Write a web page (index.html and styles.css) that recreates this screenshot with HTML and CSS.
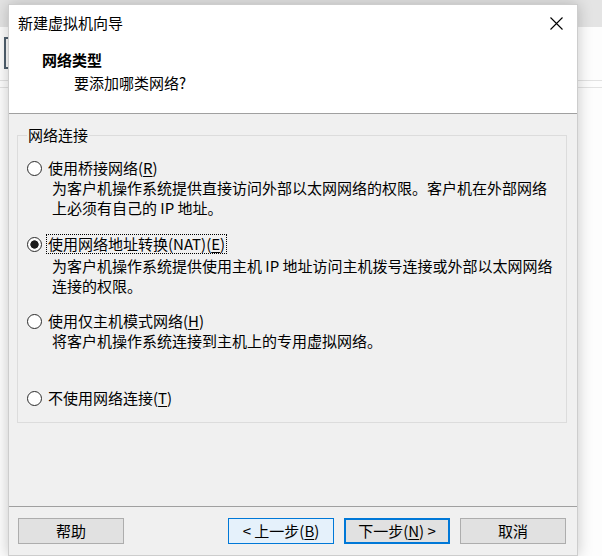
FILE: index.html
```html
<!DOCTYPE html>
<html lang="zh-CN">
<head>
<meta charset="utf-8">
<title>新建虚拟机向导</title>
<link rel="stylesheet" href="styles.css">
</head>
<body>
<div class="desk">
  <div class="backdrop">
    <div class="bd-top"></div>
    <div class="bd-box"></div>
    <div class="bd-line l1"></div>
    <div class="bd-line l2"></div>
  </div>

  <div class="dialog">
    <div class="header">
      <div class="titlebar">
        <span class="title">新建虚拟机向导</span>
        <svg class="close" width="13" height="13" viewBox="0 0 13 13">
          <path d="M0.5 0.5 L12.5 12.5 M12.5 0.5 L0.5 12.5" stroke="#000" stroke-width="1.1" fill="none"/>
        </svg>
      </div>
      <div class="h1">网络类型</div>
      <div class="h2">要添加哪类网络?</div>
    </div>

    <div class="content">
      <fieldset class="group">
        <legend>网络连接</legend>

        <div class="opt o1">
          <div class="row"><span class="radio"></span><span class="lbl">使用桥接网络(<u>R</u>)</span></div>
          <div class="desc">为客户机操作系统提供直接访问外部以太网网络的权限。客户机在外部网络<br>上必须有自己的 IP 地址。</div>
        </div>

        <div class="opt o2">
          <div class="row"><span class="radio checked"></span><span class="lbl focus">使用网络地址转换(NAT)(<u>E</u>)</span></div>
          <div class="desc d2">为客户机操作系统提供使用主机 IP 地址访问主机拨号连接或外部以太网网络<br>连接的权限。</div>
        </div>

        <div class="opt o3">
          <div class="row"><span class="radio"></span><span class="lbl">使用仅主机模式网络(<u>H</u>)</span></div>
          <div class="desc">将客户机操作系统连接到主机上的专用虚拟网络。</div>
        </div>

        <div class="opt o4">
          <div class="row"><span class="radio"></span><span class="lbl">不使用网络连接(<u>T</u>)</span></div>
        </div>
      </fieldset>
    </div>

    <div class="footer">
      <button class="btn help">帮助</button>
      <button class="btn hover">&lt; 上一步(<u>B</u>)</button>
      <button class="btn default">下一步(<u>N</u>) &gt;</button>
      <button class="btn">取消</button>
    </div>
  </div>
</div>
</body>
</html>
```

FILE: styles.css
```css
* { box-sizing: border-box; }

html, body {
  margin: 0;
  padding: 0;
  background: #fdfdfd;
}

body {
  font-family: "Noto Sans CJK SC", "Noto Sans", sans-serif;
  font-size: 15px;
  color: #000;
}

.desk {
  position: relative;
  width: 602px;
  height: 556px;
  overflow: hidden;
}

/* background application window, partially visible */
.backdrop {
  position: absolute;
  inset: 0;
}
.bd-top {
  height: 27px;
  background: #e4e4e4;
}
.bd-box {
  position: absolute;
  left: 4px;
  top: 37px;
  width: 14px;
  height: 32px;
  border: 2px solid #50606e;
}
.bd-line {
  position: absolute;
  left: 0;
  right: 0;
  height: 1px;
  background: #e2e2e2;
}
.bd-line.l1 { top: 80px; }
.bd-line.l2 { top: 87px; }

/* dialog window */
.dialog {
  position: absolute;
  left: 8px;
  top: 4px;
  width: 570px;
  height: 552px;
  border: 1px solid #cdcdcd;
  background: #f0f0f0;
  box-shadow: 0 0 14px rgba(0, 0, 0, 0.22);
  display: flex;
  flex-direction: column;
}

.header {
  height: 109px;
  background: #fff;
  border-bottom: 1px solid #a0a0a0;
  flex: none;
}

.titlebar {
  height: 36px;
  display: flex;
  align-items: center;
  justify-content: space-between;
  padding: 0 14px 0 9px;
}
.title {
  font-size: 15px;
  line-height: 20px;
}
.close { display: block; }

.h1 {
  margin-top: 9px;
  padding-left: 33px;
  line-height: 20px;
  font-weight: bold;
}
.h2 {
  margin-top: 3px;
  padding-left: 65px;
  line-height: 20px;
}

.content {
  height: 392px;
  flex: none;
  padding-top: 11px;
}

.group {
  margin: 0 10px 0 8px;
  padding: 13px 9px 14px 9px;
  border: 1px solid #dcdcdc;
  min-width: 0;
}
.group legend {
  padding: 0 1px;
  line-height: 20px;
}

.opt { white-space: nowrap; }
.o2 { margin-top: 16px; }
.o3 { margin-top: 15px; }
.o4 { margin-top: 37px; }

.row {
  display: flex;
  align-items: center;
  height: 20px;
}

.radio {
  width: 15px;
  height: 15px;
  border-radius: 50%;
  border: 1px solid #2b2b2b;
  background: #fff;
  flex: none;
}
.radio.checked {
  background: radial-gradient(circle, #1e1e1e 0 3.8px, #fff 4.5px);
}

.lbl {
  margin-left: 4px;
  padding: 0 1px;
  line-height: 18px;
  border: 1px dotted transparent;
}
.lbl.focus { border-color: #000; }

.desc {
  padding-left: 25px;
  line-height: 20px;
}
.desc.d2 { margin-top: 2px; }

u { text-decoration-thickness: 1px; text-underline-offset: 2px; }

.footer {
  flex: 1;
  border-top: 1px solid #a0a0a0;
  display: flex;
  align-items: flex-start;
  gap: 10px;
  padding: 11px 11px 0 9px;
}

.btn {
  width: 106px;
  height: 26px;
  padding: 0;
  font-family: inherit;
  font-size: 15px;
  line-height: 20px;
  color: #000;
  background: #e1e1e1;
  border: 1px solid #adadad;
  flex: none;
}
.btn.help { margin-right: auto; }
.btn.hover {
  background: #e5f1fb;
  border-color: #0078d7;
}
.btn.default {
  border: 2px solid #0078d7;
}
```
